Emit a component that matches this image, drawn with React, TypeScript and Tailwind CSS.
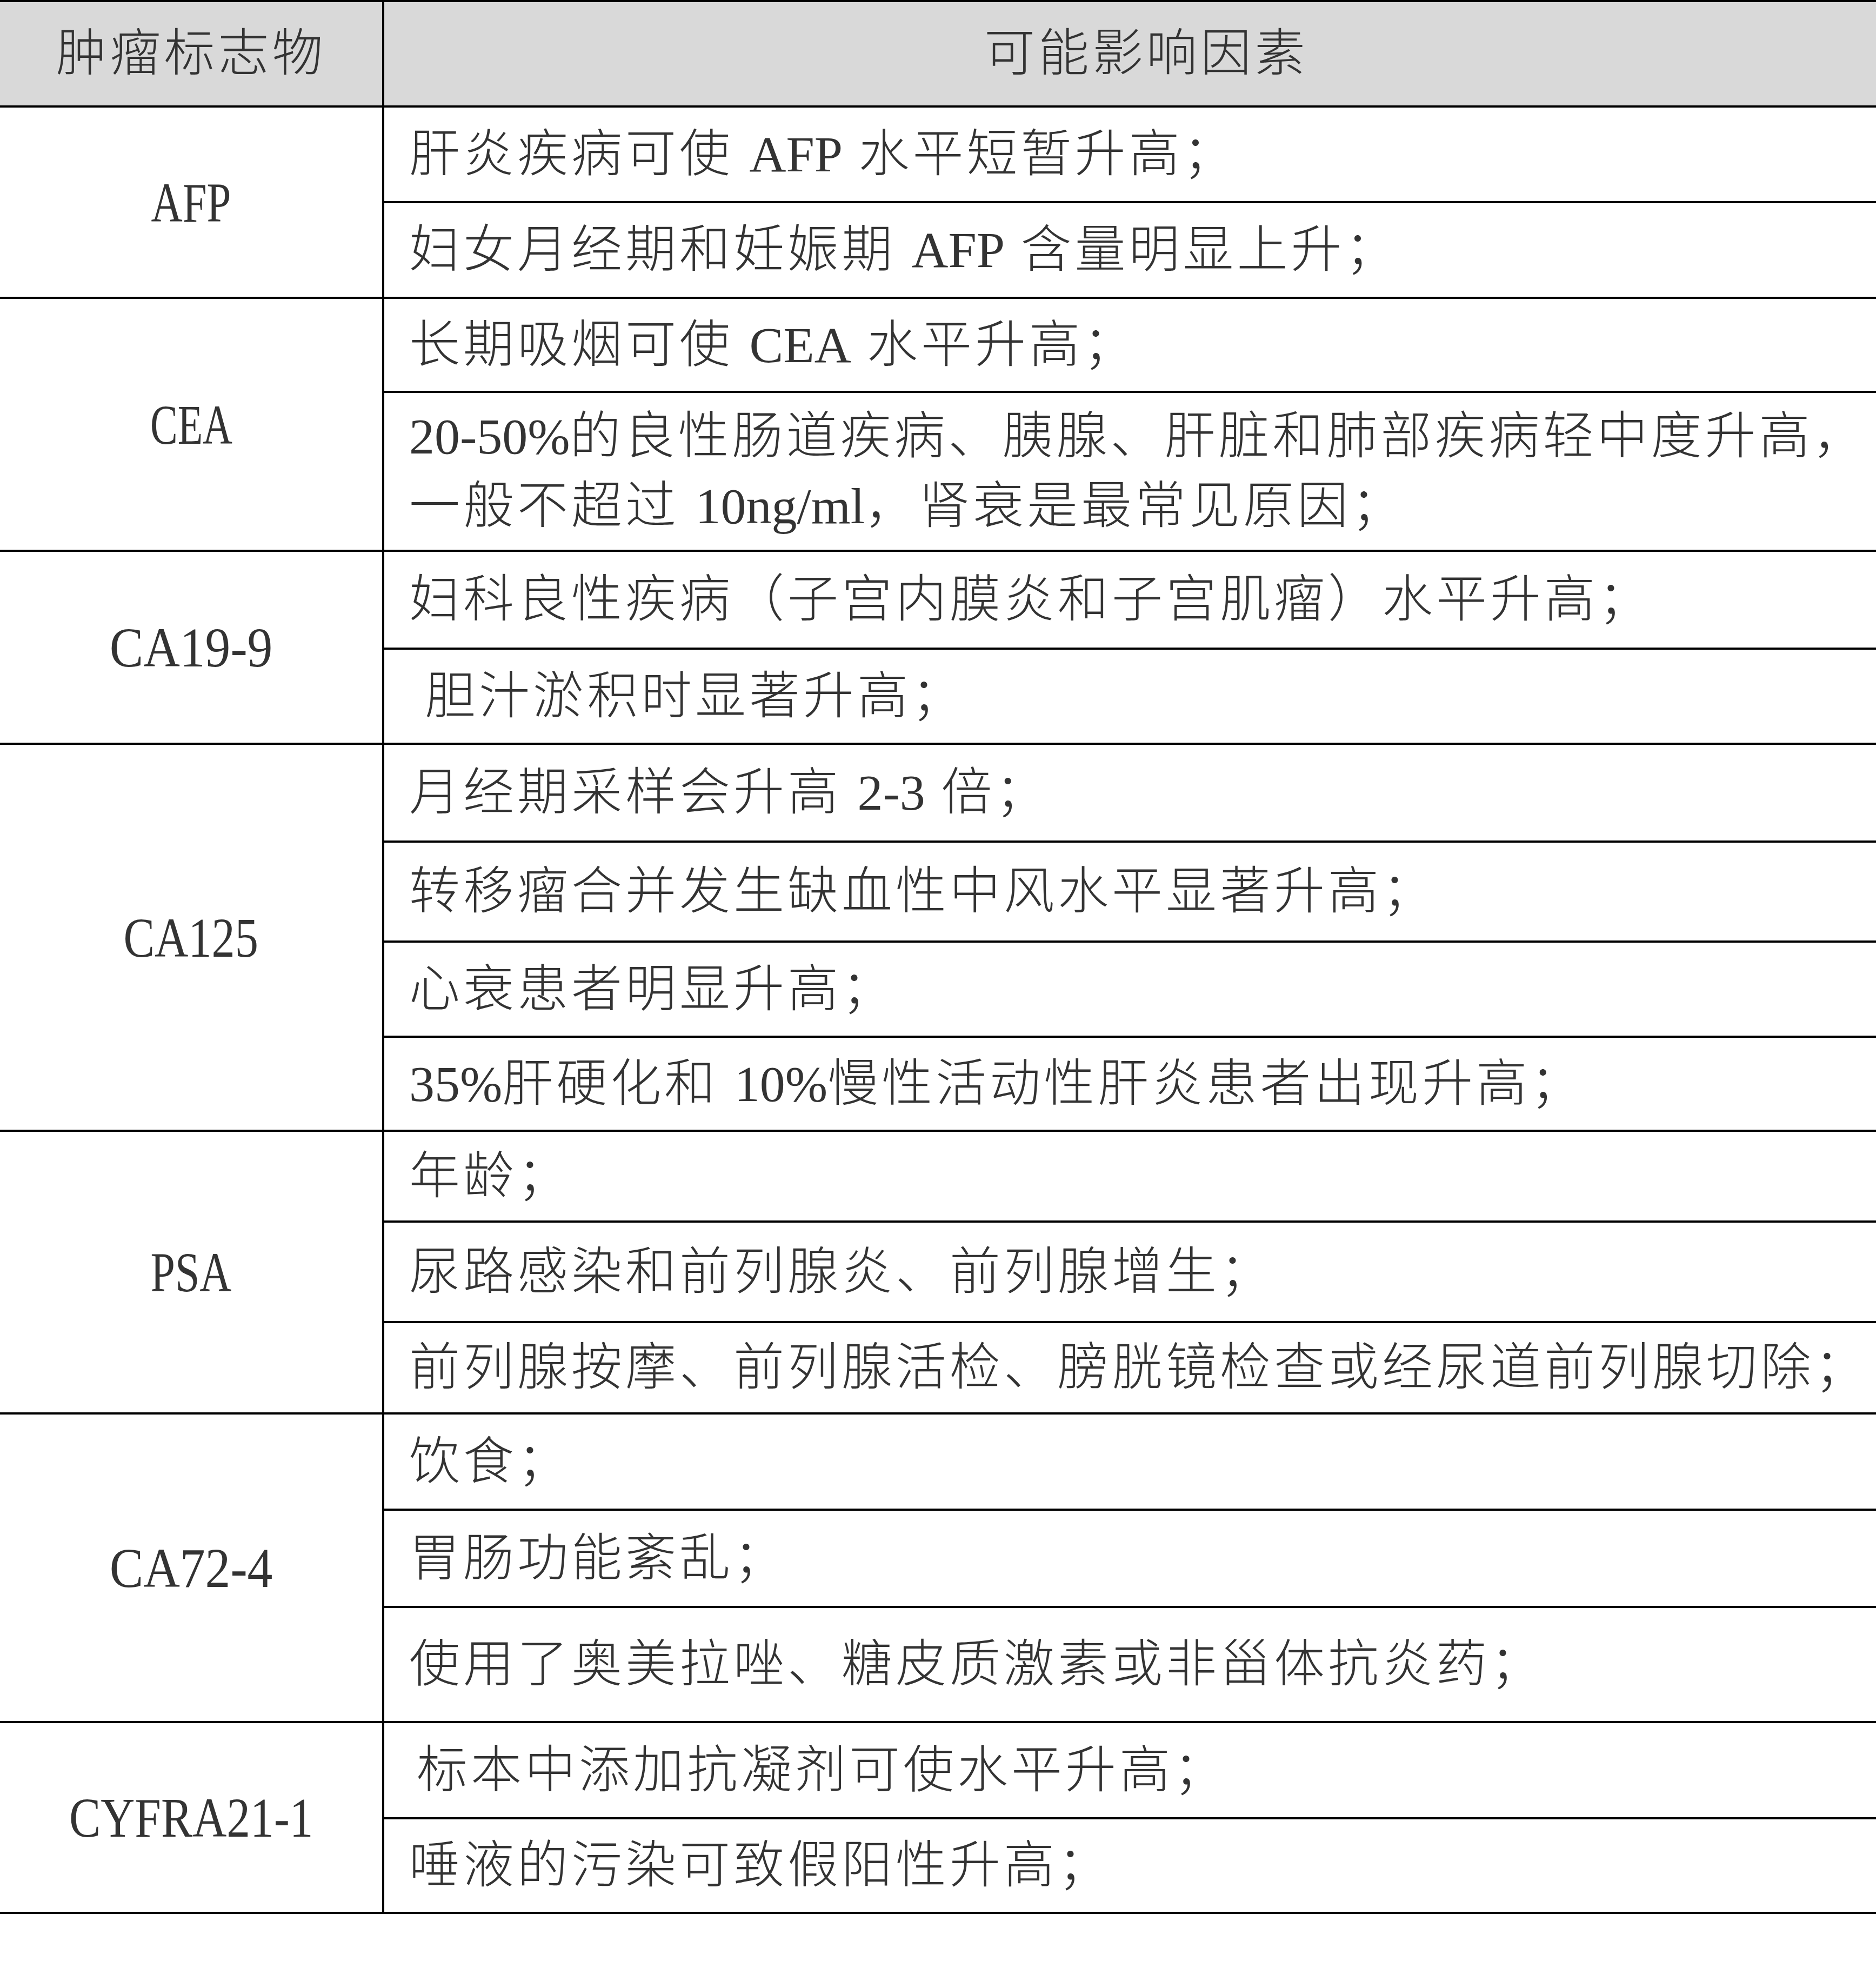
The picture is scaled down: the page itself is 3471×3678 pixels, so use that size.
// 肿瘤标志物 影响因素表
type SubRow = { h: string; text: string[]; indent?: string };
type Group = { label: string; sx: string; rows: SubRow[] };

const GROUPS: Group[] = [
  {
    label: 'AFP',
    sx: 'scale-x-[0.775]',
    rows: [
      { h: 'h-[177px]', text: ['肝炎疾病可使 AFP 水平短暂升高；'] },
      { h: 'h-[177px]', text: ['妇女月经期和妊娠期 AFP 含量明显上升；'] },
    ],
  },
  {
    label: 'CEA',
    sx: 'scale-x-[0.73]',
    rows: [
      { h: 'h-[174px]', text: ['长期吸烟可使 CEA 水平升高；'] },
      {
        h: 'h-[294px]',
        text: ['20-50%的良性肠道疾病、胰腺、肝脏和肺部疾病轻中度升高，', '一般不超过 10ng/ml，肾衰是最常见原因；'],
      },
    ],
  },
  {
    label: 'CA19-9',
    sx: 'scale-x-[0.9]',
    rows: [
      { h: 'h-[181px]', text: ['妇科良性疾病（子宫内膜炎和子宫肌瘤）水平升高；'] },
      { h: 'h-[176px]', text: ['胆汁淤积时显著升高；'], indent: 'pl-[29px]' },
    ],
  },
  {
    label: 'CA125',
    sx: 'scale-x-[0.83]',
    rows: [
      { h: 'h-[181px]', text: ['月经期采样会升高 2-3 倍；'] },
      { h: 'h-[185px]', text: ['转移瘤合并发生缺血性中风水平显著升高；'] },
      { h: 'h-[176px]', text: ['心衰患者明显升高；'] },
      { h: 'h-[174px]', text: ['35%肝硬化和 10%慢性活动性肝炎患者出现升高；'] },
    ],
  },
  {
    label: 'PSA',
    sx: 'scale-x-[0.785]',
    rows: [
      { h: 'h-[168px]', text: ['年龄；'] },
      { h: 'h-[186px]', text: ['尿路感染和前列腺炎、前列腺增生；'] },
      { h: 'h-[169px]', text: ['前列腺按摩、前列腺活检、膀胱镜检查或经尿道前列腺切除；'] },
    ],
  },
  {
    label: 'CA72-4',
    sx: 'scale-x-[0.9]',
    rows: [
      { h: 'h-[178px]', text: ['饮食；'] },
      { h: 'h-[180px]', text: ['胃肠功能紊乱；'] },
      { h: 'h-[213px]', text: ['使用了奥美拉唑、糖皮质激素或非甾体抗炎药；'] },
    ],
  },
  {
    label: 'CYFRA21-1',
    sx: 'scale-x-[0.84]',
    rows: [
      { h: 'h-[178px]', text: ['标本中添加抗凝剂可使水平升高；'], indent: 'pl-[14px]' },
      { h: 'h-[175px]', text: ['唾液的污染可致假阳性升高；'] },
    ],
  },
];

// 영문/숫자 구간은 자간 없이
function Line({ text }: { text: string }) {
  const parts = text.split(/([A-Za-z0-9%\/\-]+)/);
  return (
    <>
      {parts.map((p, i) =>
        i % 2 === 1 ? (
          <span key={i} className="tracking-normal">
            {p}
          </span>
        ) : (
          <span key={i}>{p}</span>
        ),
      )}
    </>
  );
}

export default function App() {
  return (
    <div className="min-h-screen w-[3471px] bg-white text-[#333] font-['Liberation_Serif','Noto_Sans_CJK_SC',serif] font-light text-[94px] leading-[129px]">
      <div className="border-b-4 border-black">
        {/* 표头 */}
        <div className="flex h-[195px] border-t-4 border-black bg-[#d9d9d9]">
          <div className="flex w-[711px] shrink-0 items-center justify-center border-r-4 border-black tracking-[6px]">
            肿瘤标志物
          </div>
          <div className="flex flex-1 items-center justify-center pl-[60px] tracking-[6px]">可能影响因素</div>
        </div>

        {GROUPS.map((g) => (
          <div key={g.label} className="flex">
            <div className="flex w-[711px] shrink-0 items-center justify-center border-t-4 border-r-4 border-black">
              <span className={`inline-block whitespace-nowrap text-[104px] ${g.sx}`}>{g.label}</span>
            </div>
            <div className="flex flex-1 flex-col">
              {g.rows.map((r, i) => (
                <div
                  key={i}
                  className={`flex flex-col justify-center border-t-4 border-black pl-[46px] ${r.h}`}
                >
                  {r.text.map((t) => (
                    <div key={t} className={`whitespace-nowrap tracking-[6px] ${r.indent ?? ''}`}>
                      <Line text={t} />
                    </div>
                  ))}
                </div>
              ))}
            </div>
          </div>
        ))}
      </div>
    </div>
  );
}
